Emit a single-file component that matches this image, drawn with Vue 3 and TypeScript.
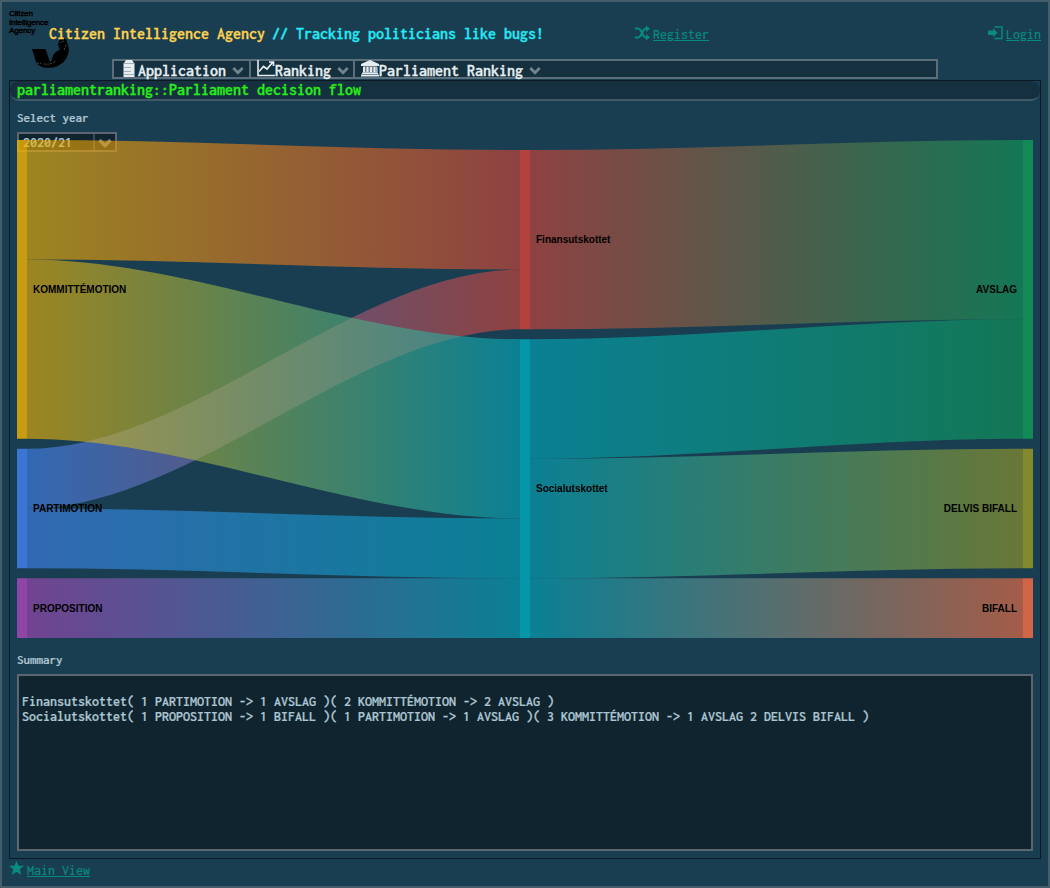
<script setup lang="ts">
interface FlowNode { name: string; x: number; start: number; units: number; color: string; right?: boolean }
interface FlowLink { from: number; to: number; fromUnit: number; toUnit: number; units: number }

const unit = 59.75
const nodes: FlowNode[] = [
  { name: 'KOMMITTÉMOTION', x: 0, start: 0, units: 5, color: '#f4b400' },
  { name: 'PARTIMOTION', x: 0, start: 308.75, units: 2, color: '#4285f4' },
  { name: 'PROPOSITION', x: 0, start: 438.25, units: 1, color: '#ab47bc' },
  { name: 'Finansutskottet', x: 503, start: 10, units: 3, color: '#db4437' },
  { name: 'Socialutskottet', x: 503, start: 199.25, units: 5, color: '#00acc1' },
  { name: 'AVSLAG', x: 1006, start: 0, units: 5, color: '#0f9d58', right: true },
  { name: 'DELVIS BIFALL', x: 1006, start: 308.75, units: 2, color: '#9e9d24', right: true },
  { name: 'BIFALL', x: 1006, start: 438.25, units: 1, color: '#ff7043', right: true },
]
const links: FlowLink[] = [
  { from: 0, to: 3, fromUnit: 0, toUnit: 0, units: 2 },
  { from: 1, to: 3, fromUnit: 0, toUnit: 2, units: 1 },
  { from: 0, to: 4, fromUnit: 2, toUnit: 0, units: 3 },
  { from: 1, to: 4, fromUnit: 1, toUnit: 3, units: 1 },
  { from: 2, to: 4, fromUnit: 0, toUnit: 4, units: 1 },
  { from: 3, to: 5, fromUnit: 0, toUnit: 0, units: 3 },
  { from: 4, to: 5, fromUnit: 0, toUnit: 3, units: 2 },
  { from: 4, to: 6, fromUnit: 2, toUnit: 0, units: 2 },
  { from: 4, to: 7, fromUnit: 4, toUnit: 0, units: 1 },
]
function linkPath(l: FlowLink): string {
  const a = nodes[l.from], b = nodes[l.to]
  const x0 = a.x + 10, x1 = b.x
  const y0 = a.start + l.fromUnit * unit, y1 = b.start + l.toUnit * unit
  const h = l.units * unit
  const c0 = x0 + (x1 - x0) / 3, c1 = x1 - (x1 - x0) / 3
  return `M${x0} ${y0}C${c0} ${y0} ${c1} ${y1} ${x1} ${y1}V${y1 + h}C${c1} ${y1 + h} ${c0} ${y0 + h} ${x0} ${y0 + h}Z`
}
const summary = `
Finansutskottet( 1 PARTIMOTION -> 1 AVSLAG )( 2 KOMMITTÉMOTION -> 2 AVSLAG )
Socialutskottet( 1 PROPOSITION -> 1 BIFALL )( 1 PARTIMOTION -> 1 AVSLAG )( 3 KOMMITTÉMOTION -> 1 AVSLAG 2 DELVIS BIFALL )`
</script>

<template>
  <div class="page">
    <header>
      <div class="logo">
        <div class="logo-text">Citizen<br>Intelligence<br>Agency</div>
        <svg class="logo-mark" width="38" height="31" viewBox="0 0 38 31">
          <path d="M0 11H13.500L18 24Q20 23 20.500 19Q22 14 28 11.500Q25 8 27 3Q28 0 32 0Q35 1 35 5Q39 13 34 21Q28 30 15 30Q6 29 4 24Z" fill="#000" />
          <path d="M5 25L9 25.500M12 26Q19 27 24 23M28 5Q30 2 33 4M34 7L32 12" fill="none" stroke="#5b6a6e" stroke-width=".7" stroke-dasharray="2 1" />
        </svg>
      </div>
      <h1><span>Citizen Intelligence Agency</span> // Tracking politicians like bugs!</h1>
      <a class="register">
        <svg width="15" height="14" viewBox="0 0 15 14"><path d="M0 2.500H3C7 2.500 7 11.500 11 11.500H12M0 11.500H3C7 11.500 7 2.500 11 2.500H12" fill="none" stroke="currentColor" stroke-width="2" /><path d="M11 -.5L15 2.700L11 6ZM11 8L15 11.300L11 14.500Z" fill="currentColor" /></svg><u>Register</u>
      </a>
      <a class="login">
        <svg width="15" height="14" viewBox="0 0 15 14"><path d="M0 4.500H5V2.300L9.500 6.800L5 11.300V9H0Z" fill="currentColor" /><path d="M6.500 1H14V12.500H6.500" fill="none" stroke="currentColor" stroke-width="1.500" /></svg><u>Login</u>
      </a>
    </header>
    <nav>
      <div class="item application">
        <svg width="12" height="17" viewBox="0 0 12 17" fill="#e5edf1"><path d="M3 0H9L11 3H1Z" /><path d="M.5 3H11.500V17H.5Z" /><path d="M1 3.500H11M1 7.500H8M1 11.500H8M1 14.500H11" stroke="#8fa0aa" stroke-width=".8" /></svg>
        <span>Application</span><svg class="chev" width="12" height="8" viewBox="0 0 12 8"><path d="M1.300 1L6 5.800L10.700 1" /></svg>
      </div>
      <div class="item ranking">
        <svg width="18" height="17" viewBox="0 0 18 17" fill="none" stroke="#e5edf1"><path d="M1 0V15.500H18" stroke-width="1.600" /><path d="M2 11.500L6.500 6.500L10 9L15.500 2.500M12 2H16.500V6" stroke-width="1.700" /></svg>
        <span>Ranking</span><svg class="chev" width="12" height="8" viewBox="0 0 12 8"><path d="M1.300 1L6 5.800L10.700 1" /></svg>
      </div>
      <div class="item parliament">
        <svg width="18" height="17" viewBox="0 0 18 17" fill="#e5edf1"><path d="M0 4L9 0L18 4V6H0ZM2 7H4V12H2ZM5.500 7H7.500V12H5.500ZM9 7H11V12H9ZM12.500 7H14.500V12H12.500ZM15.500 7H16.500V12H15.500ZM1 12.500H17V14H1ZM0 14.500H18V16.500H0Z" /><path d="M2 6H16V13H2Z" opacity=".45" /></svg>
        <span>Parliament Ranking</span><svg class="chev" width="12" height="8" viewBox="0 0 12 8"><path d="M1.300 1L6 5.800L10.700 1" /></svg>
      </div>
    </nav>
    <main>
      <h2>parliamentranking::Parliament decision flow</h2>
      <div class="label year">Select year</div>
      <div class="stage">
        <div class="select"><span>2020/21</span><i><svg width="14" height="9" viewBox="0 0 14 9"><path d="M1.500 1L7 6.500L12.500 1" /></svg></i></div>
        <svg class="flow" width="1016" height="498" viewBox="0 0 1016 498">
          <defs>
            <linearGradient v-for="(l, i) in links" :id="'flow' + i" :key="i" gradientUnits="userSpaceOnUse" :x1="nodes[l.from].x + 10" :x2="nodes[l.to].x" y1="0" y2="0">
              <stop offset="0" :stop-color="nodes[l.from].color" /><stop offset="1" :stop-color="nodes[l.to].color" />
            </linearGradient>
          </defs>
          <path v-for="(l, i) in links" :key="i" :d="linkPath(l)" :fill="`url(#flow${i})`" fill-opacity=".6" />
          <g v-for="n in nodes" :key="n.name">
            <rect :x="n.x" :y="n.start" width="10" :height="n.units * unit" :fill="n.color" fill-opacity=".8" />
            <text :x="n.right ? n.x - 6 : n.x + 16" :y="n.start + n.units * unit / 2 + 3.5" :text-anchor="n.right ? 'end' : 'start'">{{ n.name }}</text>
          </g>
        </svg>
      </div>
      <div class="label summary-label">Summary</div>
      <pre class="summary">{{ summary }}</pre>
    </main>
    <footer><svg width="15" height="14" viewBox="0 0 15 14"><path d="M7.500 0L9.600 4.800H15L10.800 8.300L12.200 14L7.500 10.800L2.800 14L4.200 8.300L0 4.800H5.400Z" fill="currentColor" /></svg><u>Main View</u></footer>
  </div>
</template>

<style>
body { margin: 0; background: #1a3e51; overflow: hidden; }
</style>
<style scoped>
* { box-sizing: border-box; }
.page { width: 1050px; height: 888px; border: 2px solid #435d6a; background: #1a3e51; padding: 7px; display: flex; flex-direction: column; font: 500 16px/20px Inconsolata, "DejaVu Sans Mono", monospace; color: #adc5d2; white-space: nowrap; -webkit-text-stroke: .2px currentColor; }
header { height: 50px; display: flex; flex-shrink: 0; }
.logo { width: 40px; height: 50px; flex: none; }
.logo-text { font: 8px/8.5px "Liberation Sans", Arial, sans-serif; color: #000; padding-top: 1px; -webkit-text-stroke: .45px #000; width: 40px; letter-spacing: -.1px; }
.logo-mark { display: block; margin: 2px 0 0 23px; }
h1 { margin: 15px 0 0; width: 586px; font-size: 16px; line-height: 20px; font-weight: 600; color: #25e9f5; -webkit-text-stroke: .3px currentColor; }
h1 span { color: #ffd34e; margin-right: -1px; -webkit-text-stroke: .3px currentColor; }
a, footer { color: #078a80; font-size: 14px; display: flex; -webkit-text-stroke: .1px currentColor; }
a { margin-top: 16px; height: 20px; }
a svg { margin: 1px 3px 0 0; overflow: visible; }
.login { margin-left: auto; }
nav { width: 826px; height: 20px; flex: none; margin-left: 103px; border: 2px solid #5b6e79; background: #15303e; display: flex; color: #e5edf1; font-weight: 600; -webkit-text-stroke: .3px #e5edf1; }
.item { height: 16px; display: flex; align-items: flex-start; border-right: 2px solid #5b6e79; }
.item:last-child { border: 0; }
.item > svg:first-child { flex: none; margin-top: -1px; }
.item span { line-height: 19px; }
.application { width: 137px; padding-left: 9px; }
.application span { margin-left: 3px; }
.ranking { width: 104px; padding-left: 6px; }
.parliament { padding-left: 6px; }
.chev { flex: none; margin: 6px 0 0 6px; }
.chev path, .select path { fill: none; stroke: #71858f; stroke-width: 2.8; }
main { width: 1032px; height: 779px; flex: none; margin-top: 1px; border: 1px solid #0b1a22; padding: 0 7px; display: flex; flex-direction: column; }
h2 { height: 20px; flex: none; margin: 0 -7px; padding-left: 7px; border-bottom: 2px solid #3f5966; border-radius: 9px; background: #15303e; color: #28ed19; font-size: 16px; line-height: 18px; font-weight: 600; -webkit-text-stroke: .3px currentColor; }
.label { font-size: 13px; line-height: 16px; font-weight: 600; }
.year { margin-top: 9px; height: 22px; }
.stage { height: 506px; position: relative; flex: none; }
.select { width: 100px; height: 20px; border: 2px solid #5b6670; background: #0f242e; display: flex; font-size: 14px; font-weight: 600; line-height: 17px; }
.select span { width: 74px; padding-left: 4px; }
.select i { border-left: 2px solid #384b56; flex: 1; padding: 5px 0 0 3px; display: flex; }
.select path { stroke-width: 3.4; }
.flow { position: absolute; left: 0; top: 8px; overflow: visible; }
.flow text { font: bold 10px "Liberation Sans", Arial, sans-serif; fill: #000; stroke: none; -webkit-text-stroke: 0; }
.summary-label { margin-top: 14px; height: 22px; }
.summary { margin: 0; width: 1016px; height: 177px; border: 2px solid #5b6670; background: #0f242e; padding: 3px; font: 600 14px/15px Inconsolata, "DejaVu Sans Mono", monospace; }
footer { margin-top: 2px; line-height: 20px; }
footer svg { margin: 0 3px 0 0; }
</style>
